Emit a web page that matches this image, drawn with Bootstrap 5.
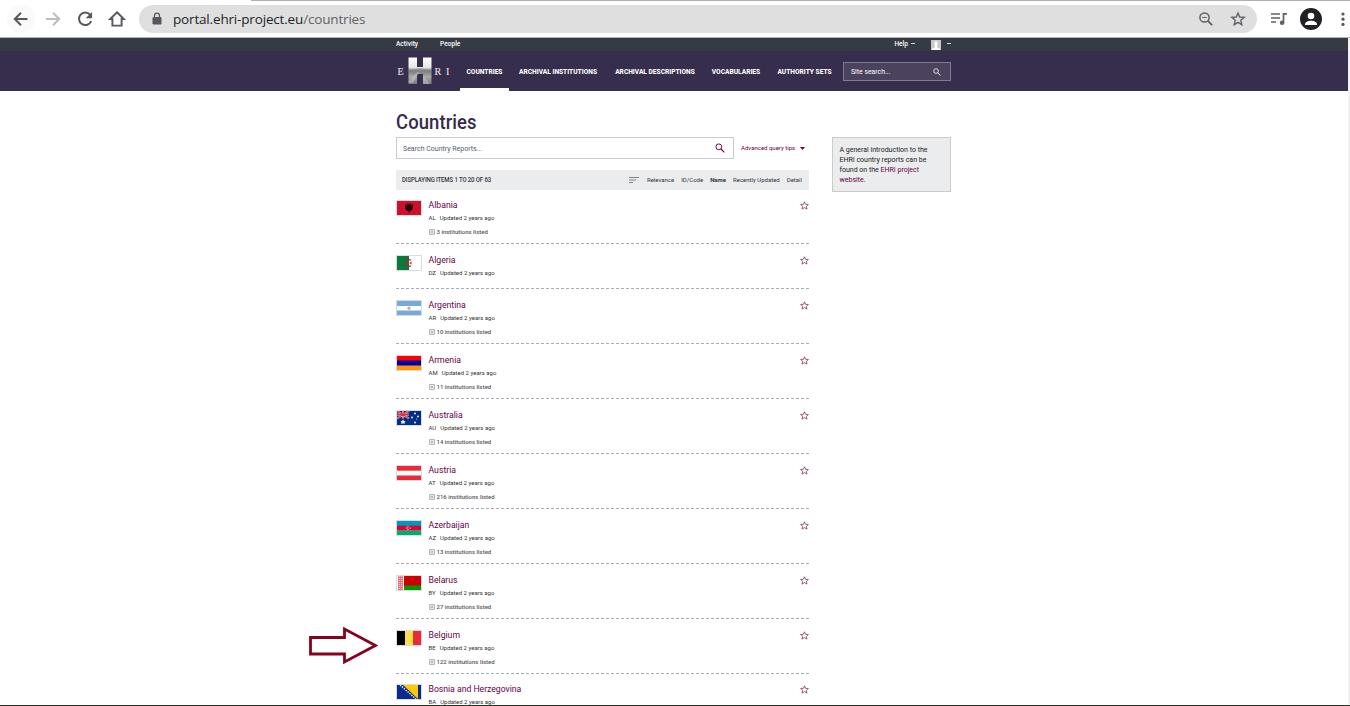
<!DOCTYPE html>
<html lang="en">
<head>
<meta charset="utf-8">
<title>Countries - EHRI Portal</title>
<link href="https://cdn.jsdelivr.net/npm/bootstrap@5.3.0/dist/css/bootstrap.min.css" rel="stylesheet">
<style>
body{font-family:Roboto,"Liberation Sans",sans-serif;font-size:6px;line-height:12px;color:#222;height:706px;overflow:hidden;background:#fff}
svg{display:block;flex:none}
a{text-decoration:none;color:#670045}
.browser-bar{height:38px;border-bottom:1px solid #b4b4b4;font-family:"Open Sans","Noto Sans",sans-serif;color:#5f6368}
.tab-edge{height:1px;margin-left:251px;background:#b0b0b0;margin-bottom:4px}
.tools{height:28px;padding-left:7px}
.address{margin-left:8px;width:1118px;height:28px;border-radius:14px;background:#dfdfdf;padding:0 11px 0 12px;font-size:13.5px;letter-spacing:-.17px}
.site{width:1348px}
.page-strip{width:2px;background:#f1f1f1}
.inner{width:555px;margin-left:396px}
.topbar{height:13px;background:#363a42;color:#fff;font-size:6.6px;font-weight:500}
.mainbar{height:40px;background:#372d4c}
.menu a{color:#fff;font-weight:800;font-size:6.6px;height:40px;line-height:42px;white-space:nowrap;text-align:center}
.menu a.active{border-bottom:3px solid #fff}
.site-search{width:108px;height:19px;margin-top:11px;border:1px solid #83798f;background:#4b425e;color:#fff;font-size:6.9px;padding:0 9px 0 7px}
h1{font-size:20.5px;font-weight:500;line-height:24px;color:#352b4b;margin:19px 0 3px;transform:scaleX(.9);transform-origin:left;letter-spacing:.1px}
.main-col{width:413px}
.query{width:338px;height:22px;border:1px solid #c9cccc;padding:0 8px 0 6px;color:#53606c;font-size:7px}
.result-bar{height:20px;margin-top:11px;background:#ebecee;padding:0 7px 0 6px;color:#34353c}
.result-bar .count{font-size:6.6px;font-weight:500;letter-spacing:-.12px;transform:scaleX(.91);transform-origin:left}
.country{height:55px;padding-top:10px;position:relative}
.country::after{content:"";position:absolute;left:0;right:0;bottom:0;height:1px;background:repeating-linear-gradient(90deg,#a5adb4 0 3px,transparent 3px 5px)}
.country.short{height:45px}
.flag{width:26px;height:16px;margin:1px 6.500px 0 0;border:1px solid #d8dbe1}
.title{font-size:8.7px;height:12px;display:block}
.meta{margin-top:1px;color:#333}
.meta span{margin-left:4px}
.inst{margin-top:2px;color:#55575c;font-weight:500;gap:2px}
.side{width:119px;height:55px;border:1px solid #c9cccc;background:#ebecee;padding:7px 6.500px;font-size:7px;line-height:10px;margin-top:46px;white-space:nowrap}
.pointer{position:absolute;left:306px;top:624px}
.bottom-edge{position:absolute;left:0;right:0;top:705px;height:1px;background:#293321}
</style>
</head>
<body>
<svg width="0" height="0" class="position-absolute">
  <symbol id="lens" viewBox="0 0 10 10"><circle cx="3.8" cy="3.8" r="2.9" fill="none" stroke="currentColor" stroke-width="1"/><path d="M6 6l3.3 3.3" stroke="currentColor" stroke-width="1.2"/></symbol>
  <symbol id="star" viewBox="0 0 9 9"><path d="M4.5.8l1.1 2.5 2.8.2-2.1 1.8.7 2.8-2.5-1.5L2 8.100l.7-2.8L.6 3.500l2.800-.2z" fill="none" stroke="#8c3158" stroke-width=".8"/></symbol>
  <symbol id="plus" viewBox="0 0 5 5"><path d="M.5.5h4v4h-4zM2.500 1.300v2.400M1.300 2.500h2.400" fill="none" stroke="#777" stroke-width=".5"/></symbol>
</svg>

<header class="browser-bar">
  <div class="tab-edge"></div>
  <div class="tools d-flex align-items-center">
    <svg width="28" height="28" viewBox="0 0 28 28"><circle cx="14" cy="14" r="14" fill="#fafafa"/><path d="M20.500 14H8.500M14 7.800L7.800 14l6.200 6.200" fill="none" stroke="#55585c" stroke-width="2"/></svg>
    <svg class="ms-1" width="28" height="28" viewBox="0 0 28 28"><path d="M7 14h12.500M14 7.800l6.200 6.200-6.200 6.200" fill="none" stroke="#bdbdbd" stroke-width="2"/></svg>
    <svg class="ms-1" width="28" height="28" viewBox="0 0 28 28"><path d="M19.200 9.800A6.300 6.300 0 1 0 20.200 16" fill="none" stroke="#55585c" stroke-width="2"/><path d="M21 7v6.300h-6.300z" fill="#55585c"/></svg>
    <svg class="ms-1" width="28" height="28" viewBox="0 0 28 28"><path d="M14 7.300l6.800 6.700h-2.200v6.600H9.400V14H7.200z" fill="none" stroke="#55585c" stroke-width="1.900"/></svg>
    <div class="address d-flex align-items-center">
      <svg width="12" height="14" viewBox="0 0 12 14"><path d="M2 5.500h8v6.500H2z" fill="#55585c" stroke="#55585c" stroke-linejoin="round"/><path d="M3.500 5V3.700a2.500 2.500 0 0 1 5 0V5" fill="none" stroke="#55585c" stroke-width="1.200"/></svg>
      <span style="margin-left:10px"><span class="text-dark">portal.ehri-project.eu</span>/countries</span>
      <svg class="ms-auto" style="margin-right:1px" width="14" height="14" viewBox="0 0 14 14"><circle cx="5.500" cy="5.500" r="4.600" fill="none" stroke="#5f6368" stroke-width="1.500"/><path d="M3.200 5.500h4.600" stroke="#5f6368"/><path d="M8.800 8.800l4.400 4.400" stroke="#5f6368" stroke-width="1.900"/></svg>
      <svg style="margin-left:16px" width="16" height="16" viewBox="0 0 16 16"><path d="M8 2l1.700 4 4.500.4-3.400 2.900 1 4.400L8 11.400l-3.800 2.300 1-4.400L1.800 6.400 6.300 6z" fill="none" stroke="#5f6368" stroke-width="1.400"/></svg>
    </div>
    <svg style="margin-left:14px" width="16" height="14" viewBox="0 0 16 14"><path d="M0 2h9M0 6h9M0 10h5" stroke="#5f6368" stroke-width="1.600"/><path d="M12.500 10.500V1.800H16" fill="none" stroke="#5f6368" stroke-width="1.700"/><circle cx="11.100" cy="10.700" r="2.300" fill="#5f6368"/></svg>
    <svg style="margin-left:13px" width="22" height="22" viewBox="0 0 22 22"><circle cx="11" cy="11" r="11" fill="#202124"/><circle cx="11" cy="8" r="3.300" fill="#fff"/><path d="M4.900 16.900c0-5.400 12.200-5.400 12.200 0z" fill="#fff"/></svg>
    <svg style="margin-left:18px" width="6" height="16" viewBox="0 0 6 16"><g fill="#55585c"><circle cx="3" cy="3" r="1.600"/><circle cx="3" cy="8.200" r="1.600"/><circle cx="3" cy="13.400" r="1.600"/></g></svg>
  </div>
</header>

<div class="d-flex">
<div class="site">
  <div class="topbar">
    <div class="inner d-flex align-items-center">
      <span style="width:44px">Activity</span><span>People</span>
      <span class="ms-auto">Help</span>
      <svg style="margin:-1px 16px 0 3px" width="4" height="3"><path d="M0 1.500h4" stroke="#ddd"/></svg>
      <svg width="10" height="11" viewBox="0 0 10 11"><path d="M0 1h10v10H0z" fill="#c9c9c9"/><path d="M3.500 3q1.500-1.500 3 0v2.500L6 7v1l3 2v1H1v-1l3-2V7l-.5-1.500z" fill="#fff"/></svg>
      <svg style="margin:-1px 0 0 6px" width="4" height="3"><path d="M0 1.500h4" stroke="#ddd"/></svg>
    </div>
  </div>
  <nav class="mainbar">
    <div class="inner d-flex">
      <svg width="64" height="40" viewBox="0 0 64 40" role="img" aria-label="EHRI">
        <defs><linearGradient id="road" x2="0" y2="1"><stop offset="0" stop-color="#fff"/><stop offset=".38" stop-color="#e6e6e6"/><stop offset=".5" stop-color="#777"/><stop offset=".72" stop-color="#aaa"/><stop offset="1" stop-color="#777"/></linearGradient></defs>
        <path d="M12.500 6.500H21v9.500h6V6.500h8.500V33H27V23h-6v10h-8.500z" fill="url(#road)"/>
        <path d="M12.500 19l11-2 12 2v3h-23z" fill="#888" opacity=".5"/><path d="M12.500 30l9-9h2l-2.500 4-4 7h-4.500zM27 24l7 9h-7z" fill="#c7c7c7" opacity=".5"/>
        <g fill="#dedae2" stroke="#dedae2" stroke-width=".2" font-family="Liberation Serif,serif" font-size="10"><text x="1.500" y="24">E</text><text x="38.500" y="24">R</text><text x="50" y="24">I</text></g>
      </svg>
      <div class="menu d-flex">
        <a href="#" class="active" style="width:49px">COUNTRIES</a>
        <a href="#" style="width:98px">ARCHIVAL INSTITUTIONS</a>
        <a href="#" style="width:96px">ARCHIVAL DESCRIPTIONS</a>
        <a href="#" style="width:66px">VOCABULARIES</a>
        <a href="#" style="width:71px">AUTHORITY SETS</a>
      </div>
      <div class="site-search d-flex align-items-center justify-content-between ms-auto"><span>Site search...</span><svg width="8" height="8"><use href="#lens"/></svg></div>
    </div>
  </nav>
  <div class="inner d-flex justify-content-between">
    <main class="main-col">
      <h1>Countries</h1>
      <div class="d-flex align-items-center">
        <div class="query d-flex align-items-center justify-content-between"><span style="padding-top:1px">Search Country Reports...</span><svg width="10" height="10" style="color:#7b0048"><use href="#lens"/></svg></div>
        <a href="#" class="d-flex align-items-center" style="margin-left:7px">Advanced query tips <svg style="margin-left:5px" width="5" height="3"><path d="M0 0h5L2.500 3z" fill="#670045"/></svg></a>
      </div>
      <div class="result-bar d-flex align-items-center">
        <span class="count">DISPLAYING ITEMS 1 TO 20 OF 63</span>
        <svg class="ms-auto" width="10" height="8"><path d="M0 1.500h10M0 4h7M0 6.500h4" stroke="#777" stroke-width=".9"/></svg>
        <span style="margin-left:7.500px">Relevance</span><span style="margin-left:7px">ID/Code</span><b style="margin-left:7px">Name</b><span style="margin-left:7px">Recently Updated</span><span style="margin-left:7px">Detail</span>
      </div>
      <div style="margin-top:-1px">
        <article class="country d-flex">
          <svg class="flag" viewBox="0 0 24 14"><path d="M0 0h24v14H0z" fill="#ce1028"/><path d="M12 4l-1-2-1 1 1 2-3-2v4l1 2 2 1 1 2 1-2 2-1 1-2V3l-3 2 1-2-1-1z" fill="#26040a"/></svg>
          <div><a href="#" class="title">Albania</a><div class="meta">AL<span>Updated 2 years ago</span></div><div class="inst d-flex align-items-center"><svg width="6" height="6"><use href="#plus"/></svg>3 institutions listed</div></div>
          <svg class="ms-auto" width="9" height="9" style="transform:translateY(2px)"><use href="#star"/></svg>
        </article>
        <article class="country short d-flex">
          <svg class="flag" viewBox="0 0 24 14"><path d="M0 0h24v14H0z" fill="#fff"/><path d="M0 0h12v14H0z" fill="#087a3c"/><path d="M14 4.200a3.300 3.300 0 1 0 0 5.600" fill="none" stroke="#d21034" stroke-width="1.300"/><path d="M12 7l3-1.500-.8 1.500.8 1.500z" fill="#d21034"/></svg>
          <div><a href="#" class="title">Algeria</a><div class="meta">DZ<span>Updated 2 years ago</span></div></div>
          <svg class="ms-auto" width="9" height="9" style="transform:translateY(2px)"><use href="#star"/></svg>
        </article>
        <article class="country d-flex">
          <svg class="flag" viewBox="0 0 24 14"><path d="M0 0h24v14H0z" fill="#75aadb"/><path d="M0 5h24v4.500H0z" fill="#fff"/><circle cx="12" cy="7.200" r="1.600" fill="#e5a85e"/></svg>
          <div><a href="#" class="title">Argentina</a><div class="meta">AR<span>Updated 2 years ago</span></div><div class="inst d-flex align-items-center"><svg width="6" height="6"><use href="#plus"/></svg>10 institutions listed</div></div>
          <svg class="ms-auto" width="9" height="9" style="transform:translateY(2px)"><use href="#star"/></svg>
        </article>
        <article class="country d-flex">
          <svg class="flag" viewBox="0 0 24 14"><path d="M0 0h24v5H0z" fill="#f00"/><path d="M0 4.500h24V10H0z" fill="#00a"/><path d="M0 9.500h24V14H0z" fill="#f90"/></svg>
          <div><a href="#" class="title">Armenia</a><div class="meta">AM<span>Updated 2 years ago</span></div><div class="inst d-flex align-items-center"><svg width="6" height="6"><use href="#plus"/></svg>11 institutions listed</div></div>
          <svg class="ms-auto" width="9" height="9" style="transform:translateY(2px)"><use href="#star"/></svg>
        </article>
        <article class="country d-flex">
          <svg class="flag" viewBox="0 0 24 14"><path d="M0 0h24v14H0z" fill="#012e87"/><path d="M0 0l12 7.500M12 0L0 7.500M6 0v7.500M0 3.700h12" stroke="#fff" stroke-width="1.700"/><path d="M0 0l12 7.500M12 0L0 7.500M6 0v7.500M0 3.700h12" stroke="#e4303c" stroke-width="1.200"/><g fill="#fff"><path d="M6 8.500l.8 1.500 1.700.2-1 1.300.2 1.500L6 12.300 4.300 13l.2-1.500-1-1.300 1.700-.2z"/><circle cx="18" cy="2.500" r=".9"/><circle cx="15" cy="6.500" r=".9"/><circle cx="21" cy="5.500" r=".9"/><circle cx="18" cy="11.500" r=".9"/><circle cx="19.500" cy="8" r=".5"/></g></svg>
          <div><a href="#" class="title">Australia</a><div class="meta">AU<span>Updated 2 years ago</span></div><div class="inst d-flex align-items-center"><svg width="6" height="6"><use href="#plus"/></svg>14 institutions listed</div></div>
          <svg class="ms-auto" width="9" height="9" style="transform:translateY(2px)"><use href="#star"/></svg>
        </article>
        <article class="country d-flex">
          <svg class="flag" viewBox="0 0 24 14"><path d="M0 0h24v14H0z" fill="#ed2939"/><path d="M0 4.700h24v4.800H0z" fill="#fff"/></svg>
          <div><a href="#" class="title">Austria</a><div class="meta">AT<span>Updated 2 years ago</span></div><div class="inst d-flex align-items-center"><svg width="6" height="6"><use href="#plus"/></svg>216 institutions listed</div></div>
          <svg class="ms-auto" width="9" height="9" style="transform:translateY(2px)"><use href="#star"/></svg>
        </article>
        <article class="country d-flex">
          <svg class="flag" viewBox="0 0 24 14"><path d="M0 0h24v5H0z" fill="#0098c3"/><path d="M0 4.700h24v5H0z" fill="#e00034"/><path d="M0 9.500h24V14H0z" fill="#00ae65"/><path d="M11.800 5.900a1.400 1.400 0 1 0 0 2.400" fill="none" stroke="#fff" stroke-width=".7"/><circle cx="13.200" cy="7.100" r=".7" fill="#fff"/></svg>
          <div><a href="#" class="title">Azerbaijan</a><div class="meta">AZ<span>Updated 2 years ago</span></div><div class="inst d-flex align-items-center"><svg width="6" height="6"><use href="#plus"/></svg>13 institutions listed</div></div>
          <svg class="ms-auto" width="9" height="9" style="transform:translateY(2px)"><use href="#star"/></svg>
        </article>
        <article class="country d-flex">
          <svg class="flag" viewBox="0 0 24 14"><path d="M0 0h24v14H0z" fill="#c00"/><path d="M6 9.500h18V14H6z" fill="#090"/><path d="M0 0h7v14H0z" fill="#fff"/><path d="M3.500 0v14" stroke="#e8757e" stroke-width="5"/><path d="M2.300 0v14M4.700 0v14" stroke="#fbdcdf" stroke-width=".9" stroke-dasharray="1 1"/></svg>
          <div><a href="#" class="title">Belarus</a><div class="meta">BY<span>Updated 2 years ago</span></div><div class="inst d-flex align-items-center"><svg width="6" height="6"><use href="#plus"/></svg>27 institutions listed</div></div>
          <svg class="ms-auto" width="9" height="9" style="transform:translateY(2px)"><use href="#star"/></svg>
        </article>
        <article class="country d-flex">
          <svg class="flag" viewBox="0 0 24 14"><path d="M0 0h8v14H0z"/><path d="M8 0h8v14H8z" fill="#fae042"/><path d="M16 0h8v14h-8z" fill="#ed2939"/></svg>
          <div><a href="#" class="title">Belgium</a><div class="meta">BE<span>Updated 2 years ago</span></div><div class="inst d-flex align-items-center"><svg width="6" height="6"><use href="#plus"/></svg>122 institutions listed</div></div>
          <svg class="ms-auto" width="9" height="9" style="transform:translateY(2px)"><use href="#star"/></svg>
        </article>
        <article class="country d-flex" style="padding-top:9px">
          <svg class="flag" viewBox="0 0 24 14"><path d="M0 0h24v14H0z" fill="#0b2a8c"/><path d="M6 0h15v14z" fill="#fecb00"/><path d="M3 0l16 14" stroke="#dfe4f2" stroke-width="1.400" stroke-dasharray="1.500 1"/></svg>
          <div><a href="#" class="title" style="letter-spacing:-.03px">Bosnia and Herzegovina</a><div class="meta">BA<span>Updated 2 years ago</span></div></div>
          <svg class="ms-auto" width="9" height="9" style="transform:translateY(2px)"><use href="#star"/></svg>
        </article>
      </div>
    </main>
    <aside class="side">A general introduction to the<br>EHRI country reports can be<br>found on the <a href="#">EHRI project<br>website</a>.</aside>
  </div>
</div>
<div class="page-strip"></div>
</div>
<svg class="pointer" width="72" height="42" viewBox="0 0 72 42"><path d="M4.500 13.500H38.500V5l31 16.500-31 16.500V30H4.500z" fill="#fff" stroke="#880020" stroke-width="2.800"/></svg>
<div class="bottom-edge"></div>
<script src="https://cdn.jsdelivr.net/npm/bootstrap@5.3.0/dist/js/bootstrap.bundle.min.js"></script>
</body>
</html>
